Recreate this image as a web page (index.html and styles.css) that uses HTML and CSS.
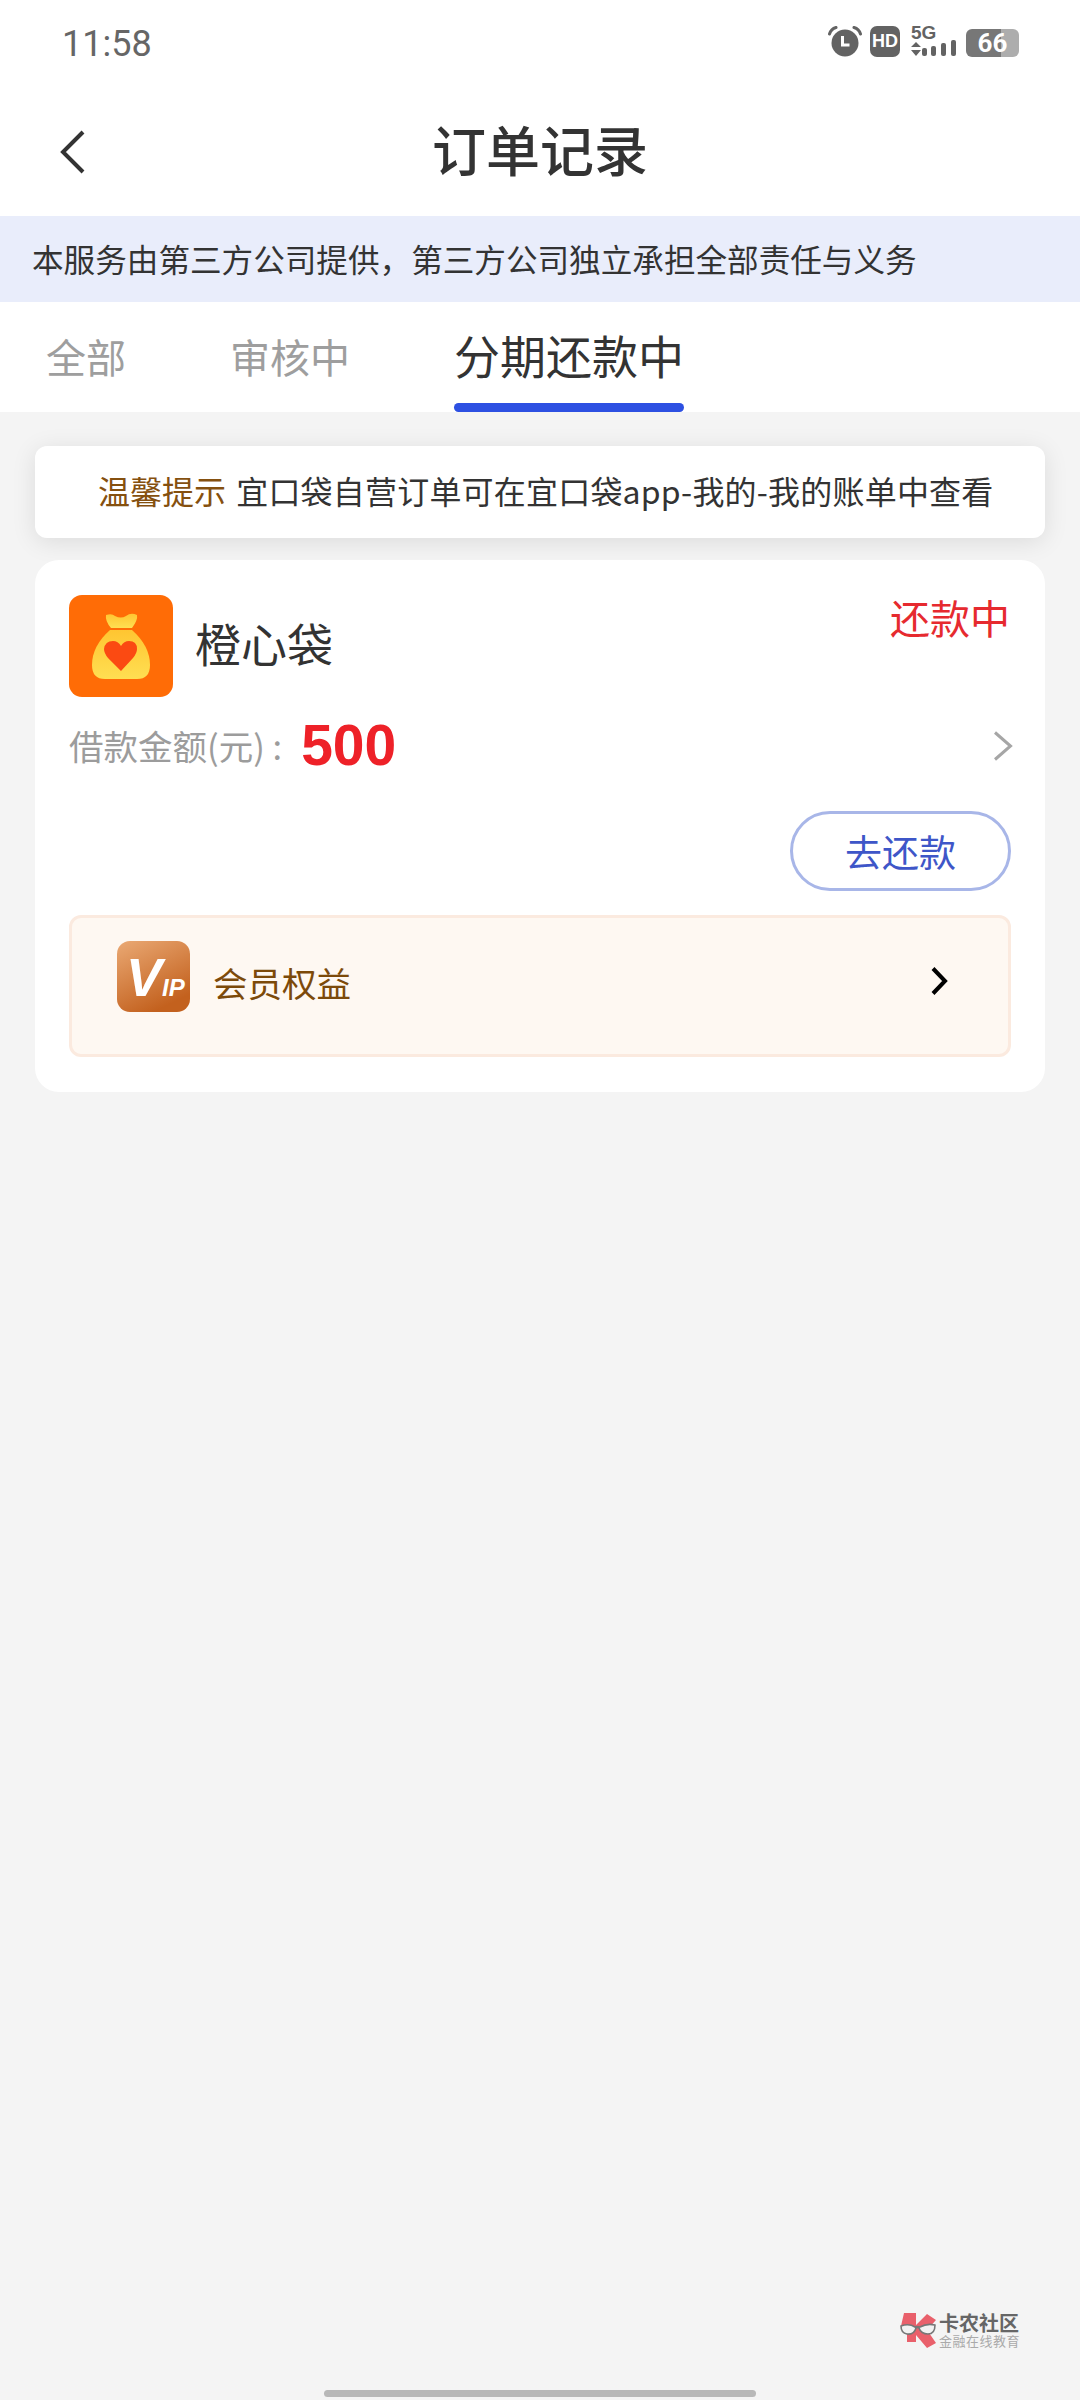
FILE: index.html
```html
<!DOCTYPE html>
<html lang="zh-CN">
<head>
<meta charset="utf-8">
<title>订单记录</title>
<link rel="stylesheet" href="styles.css">
</head>
<body>
<div class="phone">
  <header class="top">
    <div class="status">
      <span class="clock">11:58</span>
      <div class="status-icons">
        <svg class="ic-alarm" width="34" height="31" viewBox="0 0 34 31">
          <circle cx="17" cy="17" r="13.5" fill="#636363"/>
          <path d="M14.5 10v9h7" fill="none" stroke="#fff" stroke-width="3"/>
          <path d="M1.5 8Q3 3 8 1.5M32.5 8Q31 3 26 1.5" fill="none" stroke="#636363" stroke-width="3" stroke-linecap="round"/>
        </svg>
        <span class="ic-hd">HD</span>
        <div class="ic-net">
          <span class="net-text">5G</span>
          <svg width="46" height="17" viewBox="0 14 46 17">
            <path d="M5 16l5 5H0zM5 30l5-6H0z" fill="#636363"/>
            <rect x="11" y="22" width="5" height="8" rx="2" fill="#636363"/>
            <rect x="20" y="20" width="5" height="10" rx="2" fill="#636363"/>
            <rect x="30" y="17" width="5" height="13" rx="2" fill="#636363"/>
            <rect x="40" y="14" width="5" height="16" rx="2" fill="#636363"/>
          </svg>
        </div>
        <div class="battery"><span class="battery-level">66</span></div>
      </div>
    </div>
    <div class="nav">
      <svg class="back" width="26" height="44" viewBox="0 0 26 44">
        <path d="M23 2L3 22l20 20" fill="none" stroke="#333" stroke-width="4"/>
      </svg>
      <h1 class="title">订单记录</h1>
    </div>
  </header>

  <div class="banner">本服务由第三方公司提供，第三方公司独立承担全部责任与义务</div>

  <nav class="tabs">
    <span class="tab tab-all">全部</span>
    <span class="tab tab-review">审核中</span>
    <span class="tab tab-active">分期还款中</span>
  </nav>

  <main class="content">
    <div class="notice"><em class="notice-tag">温馨提示</em> <span class="notice-text">宜口袋自营订单可在宜口袋app-我的-我的账单中查看</span></div>

    <section class="order">
      <div class="order-head">
        <svg class="logo" width="104" height="102" viewBox="0 0 104 102">
          <defs>
            <linearGradient id="bagFill" x1="0" y1="0" x2="0" y2="1">
              <stop offset="0" stop-color="#ffc531"/>
              <stop offset="1" stop-color="#ffdf52"/>
            </linearGradient>
          </defs>
          <rect width="104" height="102" rx="13" fill="#ff6c06"/>
          <path d="M37 20q6-2 9 1q6 3 11 0q5-4 11-1q1 5-5 13H42q-6-7-5-13z" fill="url(#bagFill)"/>
          <path d="M41 35h22q18 16 18 35q0 14-13 14H36Q23 84 23 70q0-19 18-35z" fill="url(#bagFill)"/>
          <path d="M52 76L39 63q-4-5-4-9q1-8 9-8q5 0 8 5q3-5 8-5q8 0 8 8q0 4-4 9z" fill="#fb4a12"/>
        </svg>
        <span class="order-name">橙心袋</span>
        <span class="order-state">还款中</span>
      </div>
      <div class="amount-row">
        <span class="amount-label">借款金额(元) :</span>
        <span class="amount">500</span>
        <svg class="row-arrow" width="20" height="30" viewBox="0 0 20 30">
          <path d="M2 1.5L17.5 15L2 28.5" fill="none" stroke="#a6a6a6" stroke-width="3"/>
        </svg>
      </div>
      <div class="actions"><button class="repay">去还款</button></div>
      <div class="vip">
        <svg class="vip-icon" width="73" height="71" viewBox="0 0 73 71">
          <defs>
            <linearGradient id="vipFill" x1="0" y1="0" x2="0.5" y2="1">
              <stop offset="0" stop-color="#eaa974"/>
              <stop offset="1" stop-color="#c3611e"/>
            </linearGradient>
          </defs>
          <rect width="73" height="71" rx="13" fill="url(#vipFill)"/>
          <text class="vip-v" x="9" y="55">V<tspan class="vip-ip">IP</tspan></text>
        </svg>
        <span class="vip-text">会员权益</span>
        <svg class="vip-arrow" width="18" height="28" viewBox="0 0 18 28">
          <path d="M3 1.5L15 14L3 26.5" fill="none" stroke="#000" stroke-width="4"/>
        </svg>
      </div>
    </section>
  </main>

  <div class="mark">
    <svg width="38" height="36" viewBox="0 0 38 36">
      <path d="M4 1h12v12L27 2l9 6-9 10 9 13-9 5-11-13v7H7V20L1 14z" fill="#e9606b"/>
      <path d="M1 14q8-3 14 1q2-1 5 0q7-4 15-2q0 9-7 9q-7 0-9-6q-2-1-3 0q-2 7-9 6q-6-1-6-8z" fill="#f2f2f2" stroke="#777" stroke-width="1.6"/>
    </svg>
    <div class="mark-words">
      <span class="mark-name">卡农社区</span>
      <span class="mark-sub">金融在线教育</span>
    </div>
  </div>
  <div class="home-bar"></div>
</div>
</body>
</html>
```
FILE: styles.css
```css
* { box-sizing: border-box; }

html, body { margin: 0; padding: 0; }

body {
  font-family: "Noto Sans CJK SC", "Noto Sans", sans-serif;
  background: #f4f4f4;
}

.phone {
  position: relative;
  width: 1080px;
  height: 2400px;
  overflow: hidden;
  background: #f4f4f4;
}

/* status bar and title */
.top { background: #fff; height: 216px; }

.status {
  height: 88px;
  padding: 24px 61px 0 62px;
  display: flex;
  justify-content: space-between;
  align-items: flex-start;
}

.clock {
  font-family: Roboto, sans-serif;
  font-size: 36px;
  line-height: 40px;
  color: #666;
}

.status-icons { display: flex; align-items: flex-start; margin-top: 2px; }

.ic-alarm { margin-right: 8px; }

.ic-hd {
  width: 30px;
  height: 31px;
  margin-right: 11px;
  border-radius: 7px;
  background: #636363;
  color: #fff;
  font: bold 18px/31px "Liberation Sans", sans-serif;
  text-align: center;
}

.ic-net {
  width: 46px;
  height: 31px;
  margin-right: 9px;
  display: flex;
  flex-direction: column;
  justify-content: space-between;
}

.net-text { height: 14px; font: bold 19px/14px "Liberation Sans", sans-serif; color: #636363; }

.ic-net svg { display: block; }

.battery {
  width: 53px;
  height: 28px;
  margin-top: 3px;
  border-radius: 6px;
  background: linear-gradient(90deg, #777 0 66%, #adadad 66% 100%);
  color: #fff;
  text-align: center;
  font: bold 26px/28px Roboto, sans-serif;
}

.nav {
  position: relative;
  height: 128px;
  padding-left: 60px;
  display: flex;
  align-items: center;
}

.title {
  position: absolute;
  inset: 0;
  margin: 0;
  text-align: center;
  font-size: 54px;
  font-weight: 500;
  line-height: 122px;
  color: #333;
}

.banner {
  height: 86px;
  padding-left: 32px;
  background: #e9edfb;
  color: #333;
  font-size: 31.6px;
  line-height: 84px;
}

/* tabs */
.tabs {
  height: 110px;
  background: #fff;
  display: flex;
  align-items: flex-start;
}

.tab { color: #9e9e9e; font-size: 40px; line-height: 48px; margin-top: 30px; }

.tab-all { margin-left: 46px; }

.tab-review { margin-left: 104px; }

.tab-active {
  position: relative;
  height: 88px;
  margin: 22px 0 0 104px;
  font-size: 46px;
  line-height: 60px;
  color: #333;
}

.tab-active::after {
  content: "";
  position: absolute;
  left: 0;
  right: 0;
  bottom: 0;
  height: 9px;
  border-radius: 5px;
  background: #2d50e2;
}

/* list area */
.content { padding: 34px 35px 0; }

.notice {
  height: 92px;
  padding-left: 63px;
  border-radius: 12px;
  background: #fff;
  box-shadow: 0 4px 24px rgba(0, 0, 0, 0.1);
  color: #333;
  font-size: 32px;
  line-height: 88px;
  white-space: nowrap;
}

.notice-tag { font-style: normal; color: #85500f; margin-right: 3px; }

.notice-text { letter-spacing: 0.2px; }

.order {
  height: 532px;
  margin-top: 22px;
  padding: 35px 34px 0 34px;
  border-radius: 24px;
  background: #fff;
}

.order-head { position: relative; display: flex; align-items: center; height: 102px; }

.order-name { margin: -8px 0 0 22px; font-size: 46px; line-height: 60px; color: #333; }

.order-state {
  margin: -2px 1px 0 auto;
  align-self: flex-start;
  font-size: 40px;
  line-height: 48px;
  color: #e62a2f;
}

.amount-row { display: flex; align-items: center; height: 60px; margin-top: 18px; }

.amount-label { font-size: 34.5px; line-height: 60px; color: #9c9c9c; white-space: nowrap; }

.amount {
  margin-left: 19px;
  font: bold 57px/60px "Liberation Sans", sans-serif;
  color: #ee2128;
}

.row-arrow { margin: 2px -2px 0 auto; }

.actions { display: flex; justify-content: flex-end; margin-top: 36px; }

.repay {
  width: 221px;
  height: 80px;
  padding: 0;
  border: 3px solid #a8b6e8;
  border-radius: 40px;
  background: #fff;
  font-family: inherit;
  font-size: 37px;
  color: #3e56c8;
}

.vip {
  height: 142px;
  margin-top: 24px;
  padding: 23px 60px 0 45px;
  display: flex;
  align-items: flex-start;
  border: 3px solid #fbeadf;
  border-radius: 12px;
  background: #fef8f2;
}

.vip-text { margin: 19px 0 0 23px; font-size: 34.5px; line-height: 44px; color: #7c4a0a; }

.vip-arrow { margin: 26px 0 0 auto; }

.vip-v { font: italic bold 54px "Liberation Sans", sans-serif; fill: #fff; }

.vip-ip { font-size: 24px; }

/* watermark and gesture bar float over the page */
.mark {
  position: absolute;
  left: 900px;
  top: 2312px;
  display: flex;
  gap: 1px;
}

.mark-words { display: flex; flex-direction: column; width: 82px; }

.mark-name { font-size: 20px; font-weight: 700; line-height: 22px; color: #666; white-space: nowrap; }

.mark-sub { font-size: 13px; line-height: 14px; letter-spacing: 0.5px; color: #aaa; white-space: nowrap; }

.home-bar {
  position: absolute;
  left: 324px;
  top: 2390px;
  width: 432px;
  height: 7px;
  border-radius: 4px;
  background: #b8b8b8;
}
```
